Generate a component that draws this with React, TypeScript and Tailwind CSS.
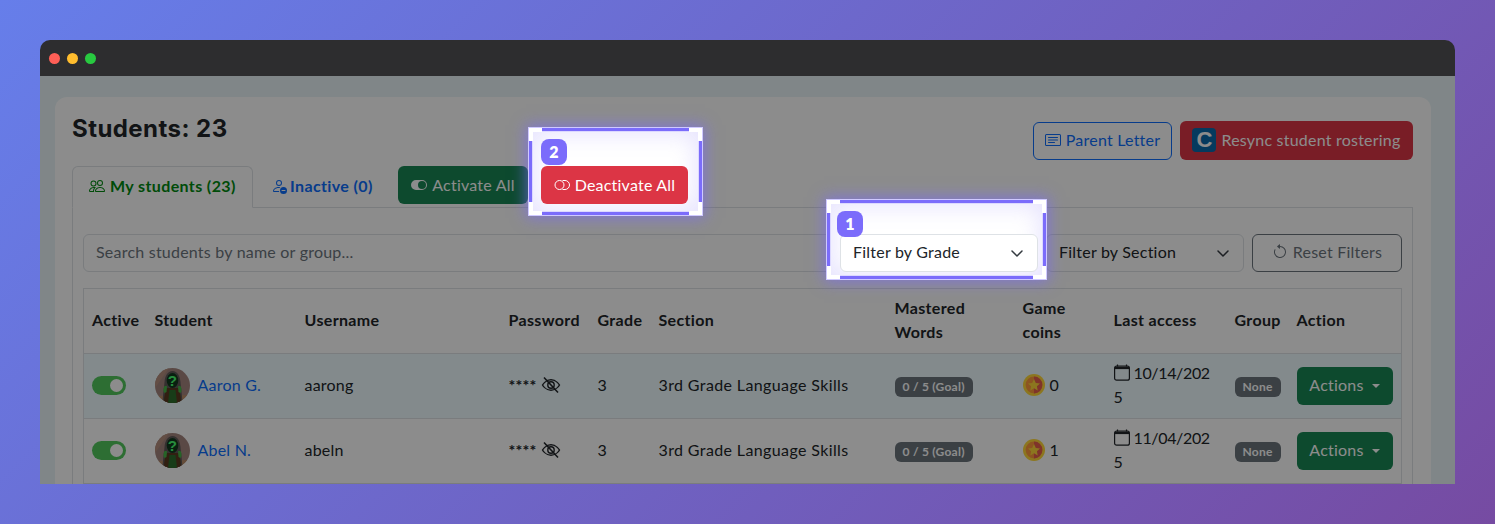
import React from "react";

const Corner = ({ pos }: { pos: string }) => <span className={`absolute w-[13px] h-[13px] border-white ${pos}`} />;

function Spot({ cls, badge, badgeCls, children }: { cls: string; badge: string; badgeCls: string; children: React.ReactNode }) {
  return (
    <div className="relative z-20 shrink-0">
      <div className={`absolute bg-white border-[3px] border-[#7b6cfb] outline outline-1 outline-[#cfc9ff] shadow-[0_0_14px_3px_rgba(123,108,251,0.65),inset_0_0_0_1px_#dcd8ff,inset_0_0_22px_4px_rgba(123,108,251,0.18)] ${cls}`}>
        <Corner pos="-top-[3px] -left-[3px] border-t-[4px] border-l-[4px]" />
        <Corner pos="-top-[3px] -right-[3px] border-t-[4px] border-r-[4px]" />
        <Corner pos="-bottom-[3px] -left-[3px] border-b-[4px] border-l-[4px]" />
        <Corner pos="-bottom-[3px] -right-[3px] border-b-[4px] border-r-[4px]" />
      </div>
      <div className="relative">{children}</div>
      <span className={`absolute w-[26px] h-[26px] rounded-lg bg-[#7b6cfb] text-white text-[16px] font-extrabold flex items-center justify-center ${badgeCls}`}>{badge}</span>
    </div>
  );
}

const Chevron = () => (
  <svg width="16" height="16" viewBox="0 0 16 16" fill="none" stroke="#343a40" strokeWidth="1.5" strokeLinecap="round" strokeLinejoin="round" className="mt-[2px]"><path d="m3 6 5 5 5-5" /></svg>
);

const People = () => (
  <svg width="16" height="16" viewBox="0 0 16 16" fill="currentColor"><path d="M15 14s1 0 1-1-1-4-5-4-5 3-5 4 1 1 1 1zm-7.978-1L7 12.996c.001-.264.167-1.03.76-1.72C8.312 10.629 9.282 10 11 10c1.717 0 2.687.63 3.24 1.276.593.69.758 1.457.76 1.72l-.008.002-.014.002zM11 7a2 2 0 1 0 0-4 2 2 0 0 0 0 4m3-2a3 3 0 1 1-6 0 3 3 0 0 1 6 0M6.936 9.28a6 6 0 0 0-1.23-.247A7 7 0 0 0 5 9c-4 0-5 3-5 4q0 1 1 1h4.216A2.24 2.24 0 0 1 5 13c0-1.01.377-2.042 1.09-2.904.243-.294.526-.569.846-.816M4.92 10A5.5 5.5 0 0 0 4 13H1c0-.26.164-1.03.76-1.724.545-.636 1.492-1.256 3.16-1.275ZM1.5 5.5a3 3 0 1 1 6 0 3 3 0 0 1-6 0m3-2a2 2 0 1 0 0 4 2 2 0 0 0 0-4" /></svg>
);
const PersonDash = () => (
  <svg width="16" height="16" viewBox="0 0 16 16" fill="currentColor"><path d="M12.5 16a3.5 3.5 0 1 0 0-7 3.5 3.5 0 0 0 0 7M11 12h3a.5.5 0 0 1 0 1h-3a.5.5 0 0 1 0-1" fillRule="evenodd" /><path d="M8 8a3 3 0 1 0 0-6 3 3 0 0 0 0 6m2-3a2 2 0 1 1-4 0 2 2 0 0 1 4 0M8 9c-4 0-6 2.500-6 4 0 1 1 1 1 1h5.256A4.500 4.500 0 0 1 8 13H3c.01-.24.16-.97.84-1.650C4.500 10.690 5.740 10 8 10c.2 0 .4.01.58.02.23-.33.51-.63.82-.88A9 9 0 0 0 8 9" /></svg>
);
const ToggleOn = () => (
  <svg width="16" height="16" viewBox="0 0 16 16" fill="currentColor"><path d="M5 3a5 5 0 0 0 0 10h6a5 5 0 0 0 0-10zm6 9a4 4 0 1 1 0-8 4 4 0 0 1 0 8" /></svg>
);
const ToggleOff = () => (
  <svg width="16" height="16" viewBox="0 0 16 16" fill="none" stroke="currentColor"><circle cx="5.500" cy="8" r="4.500" /><path d="M8.500 3.500H11a4.500 4.500 0 0 1 0 9H8.500" /></svg>
);
const Letter = () => (
  <svg width="16" height="16" viewBox="0 0 16 16" fill="currentColor"><path d="M14.500 3a.5.5 0 0 1 .5.5v9a.5.5 0 0 1-.5.5h-13a.5.5 0 0 1-.5-.5v-9a.5.5 0 0 1 .5-.5zm-13-1A1.500 1.500 0 0 0 0 3.500v9A1.500 1.500 0 0 0 1.500 14h13a1.500 1.500 0 0 0 1.500-1.500v-9A1.500 1.500 0 0 0 14.500 2z" /><path d="M3 5.500a.5.5 0 0 1 .5-.5h9a.5.5 0 0 1 0 1h-9a.5.5 0 0 1-.5-.5M3 8a.5.5 0 0 1 .5-.5h9a.5.5 0 0 1 0 1h-9A.5.5 0 0 1 3 8m0 2.500a.5.5 0 0 1 .5-.5h6a.5.5 0 0 1 0 1h-6a.5.5 0 0 1-.5-.5" /></svg>
);
const Reset = () => (
  <svg width="16" height="16" viewBox="0 0 16 16" fill="currentColor"><path fillRule="evenodd" d="M8 3a5 5 0 1 1-4.546 2.914.5.5 0 0 0-.908-.417A6 6 0 1 0 8 2z" /><path d="M8 4.466V.534a.25.25 0 0 0-.41-.192L5.230 2.308a.25.25 0 0 0 0 .384l2.360 1.966A.25.25 0 0 0 8 4.466" /></svg>
);
const EyeSlash = () => (
  <svg width="20" height="20" viewBox="0 0 20 20" fill="none" stroke="#212529" strokeWidth="1.4" className="shrink-0"><path d="M1.500 10S4.500 4.800 10 4.800 18.500 10 18.500 10 15.500 15.200 10 15.200 1.500 10 1.500 10Z" /><circle cx="10" cy="10" r="3.200" /><path d="M3 2.500 17 17.500" strokeWidth="1.600" /></svg>
);
const Calendar = () => (
  <svg width="16" height="17" viewBox="0 0 16 17" fill="none" className="shrink-0"><rect x="0.600" y="2" width="14.800" height="14.200" rx="2" stroke="#212529" strokeWidth="1.200" /><path d="M1 2.500h14v2.600H1z" fill="#212529" /><path d="M3.500 0.600v2M12.500 0.600v2" stroke="#212529" strokeWidth="1.200" /></svg>
);
const Coin = () => (
  <svg width="22" height="22" viewBox="0 0 22 22" className="shrink-0"><circle cx="11" cy="11" r="11" fill="#ffd83a" /><circle cx="11" cy="11" r="8.400" fill="#ff9a3c" /><path d="M11 2.600a8.400 8.400 0 0 1 0 16.800z" fill="#e8604e" /><path d="m11 5 1.800 3.900 4.200.5-3.100 2.800.8 4.200L11 14.300l-3.700 2.100.8-4.200L5 9.400l4.200-.5z" fill="#ffd83a" /></svg>
);
const Avatar = () => (
  <svg width="35" height="35" viewBox="0 0 35 35" className="shrink-0 rounded-full">
    <rect width="35" height="35" fill="#a5867f" />
    <path d="M0 0h14L0 20z" fill="#b58f7e" />
    <path d="M0 28 35 27v8H0z" fill="#b98c68" />
    <path d="M17.500 3c5 0 7.500 5 8 11 .5 7 1.500 11 2 21H7.500c.5-10 1.500-14 2-21 .5-6 3-11 8-11Z" fill="#5f5a58" />
    <path d="M9 35c0-7 1-11 3-15h11c2 4 3 8 3 15z" fill="#5a3a20" />
    <path d="M14.500 22h6l1.500 13H13z" fill="#2c6e2c" />
    <path d="M9.500 18c-1.500 3-1.500 5 0 7l2-1 .5-6zM25.500 18c1.500 3 1.500 5 0 7l-2-1-.5-6z" fill="#46b548" />
    <ellipse cx="17.500" cy="12.500" rx="5.800" ry="7.500" fill="#123a1e" />
    <text x="17.500" y="18" textAnchor="middle" fontSize="15" fontWeight="800" fill="#48ff72" fontFamily="'Liberation Sans',sans-serif">?</text>
  </svg>
);

const Th = ({ children }: { children: React.ReactNode }) => (
  <th className="px-2 pt-[7px] pb-[9px] text-left font-bold tracking-[0.35px] align-middle border-b border-[#dee2e6] leading-6">{children}</th>
);

const Pill = ({ children }: { children: React.ReactNode }) => (
  <span className="inline-block px-[8px] py-[4px] rounded-md bg-[#6c757d] text-white text-[12px] font-bold tracking-[0.25px] leading-3">{children}</span>
);

function Row({ name, user, coins, date, tint }: { name: string; user: string; coins: string; date: string; tint?: boolean }) {
  const td = "px-2 pt-[7px] pb-[9px] align-middle";
  return (
    <tr className={`border-b border-[#dee2e6] h-[65px] ${tint ? "bg-[#eefbff]" : ""}`}>
      <td className={td}><span className="flex items-center justify-end w-[34px] h-[19px] rounded-full bg-[#52c85e] pr-[3px]"><span className="w-[13px] h-[13px] rounded-full bg-white" /></span></td>
      <td className={td}><span className="flex items-center gap-2"><Avatar /><span className="text-[#0d6efd]">{name}</span></span></td>
      <td className={td}>{user}</td>
      <td className={td}><span className="flex items-center gap-[4px]"><span className="font-bold tracking-[0.2px]">****</span><EyeSlash /></span></td>
      <td className={td}>3</td>
      <td className={`${td} tracking-[0.38px]`}>3rd Grade Language Skills</td>
      <td className={td}><Pill>0 / 5 (Goal)</Pill></td>
      <td className={td}><span className="flex items-center gap-[5px]"><Coin />{coins}</span></td>
      <td className="pl-2 pr-[14px] pt-[7px] pb-[9px] align-middle leading-6 tracking-[-0.35px]"><span className="[word-break:break-all]"><span className="inline-block align-[-2px] mr-[4px]"><Calendar /></span>{date}</span></td>
      <td className={td}><Pill>None</Pill></td>
      <td className="p-2 align-middle"><button className="w-[96px] h-[38px] rounded-md bg-[#198754] text-white flex items-center justify-center gap-2 pb-[2px]">Actions<span className="w-0 h-0 mt-[1px] border-x-[4.500px] border-x-transparent border-t-[4.500px] border-t-white" /></button></td>
    </tr>
  );
}

export default function App() {
  return (
    <div className="w-[1495px] h-[524px] p-10 overflow-hidden bg-[linear-gradient(135deg,#667eea_0%,#764ba2_100%)] text-[16px] tracking-[0.22px] text-[#212529] font-['Lato','Noto_Sans',sans-serif]">
      <div className="h-[444px] rounded-t-[10px] overflow-hidden flex flex-col">
        <div className="h-9 shrink-0 bg-[#2d2d2f] flex items-center gap-[7px] pl-[9px]">
          <span className="w-[11px] h-[11px] rounded-full bg-[#ff5f57]" />
          <span className="w-[11px] h-[11px] rounded-full bg-[#ffbd2e]" />
          <span className="w-[11px] h-[11px] rounded-full bg-[#28c940]" />
        </div>
        <div className="relative flex-1 bg-[#e9f5f7] pt-[21px] px-[15px] pr-6 overflow-hidden">
          <div className="rounded-t-xl bg-white px-[17px] pr-[18px] pt-[23px] h-[500px]">
            <div className="flex items-start justify-between h-[46px]">
              <h1 className="text-[24px] leading-[18px] font-bold tracking-[0.45px] font-['Inter',sans-serif] text-[#212529]">Students: 23</h1>
              <div className="flex gap-2 items-center pt-px">
                <button className="h-[38px] w-[139px] rounded-md border border-[#0d6efd] text-[#0d6efd] pb-[2px] flex items-center justify-center gap-[5px]"><Letter />Parent Letter</button>
                <button className="h-[39px] w-[233px] rounded-md bg-[#dc3545] text-white pb-[2px] flex items-center justify-center gap-[5px]">
                  <span className="w-6 h-6 rounded-[4px] bg-[#0a6aab] font-['Liberation_Sans',sans-serif] font-bold text-[22px] flex items-center justify-center">C</span>
                  Resync student rostering
                </button>
              </div>
            </div>
            <div className="flex items-start h-[42px] relative">
              <div className="h-[42px] w-[181px] rounded-t-md border border-[#dee2e6] border-b-white bg-white relative z-[1] flex items-center pl-[16px] pb-[2px] gap-[5px] font-bold tracking-[0.38px] text-[#008a10]"><People />My students (23)</div>
              <div className="h-[42px] w-[120px] flex items-center pl-[18px] pb-[2px] gap-[3px] font-bold tracking-[0.38px] text-[#0d6efd]"><PersonDash />Inactive (0)</div>
              <button className="ml-[25px] h-[38px] w-[130px] rounded-md bg-[#198754] text-white flex items-center justify-center gap-[5px]"><ToggleOn />Activate All</button>
              <div className="ml-[13px]">
                <Spot cls="-left-[12px] -right-[14px] -top-[38px] -bottom-[11px]" badge="2" badgeCls="left-0 -top-[27px]">
                  <button className="h-[38px] w-[147px] rounded-md bg-[#dc3545] text-white flex items-center justify-center gap-[5px]"><ToggleOff />Deactivate All</button>
                </Spot>
              </div>
            </div>
            <div className="border border-[#dee2e6] p-[10px] pt-[26px] -mt-px h-[400px]">
              <div className="flex gap-2 h-[38px]">
                <div className="flex-1 rounded-md border border-[#dee2e6] bg-white px-3 pb-[2px] flex items-center text-[#6c757d]">Search students by name or group...</div>
                <Spot cls="-left-[13px] -right-[8px] -top-[34px] -bottom-[7px]" badge="1" badgeCls="-left-[3px] -top-[23px]">
                  <div className="w-[198px] h-[38px] rounded-md border border-[#dee2e6] bg-white pl-3 pr-[12px] pb-[2px] flex items-center justify-between">Filter by Grade<Chevron /></div>
                </Spot>
                <div className="w-[198px] h-[38px] rounded-md border border-[#dee2e6] bg-white pl-3 pr-[12px] pb-[2px] flex items-center justify-between">Filter by Section<Chevron /></div>
                <button className="w-[150px] h-[38px] rounded-md border border-[#6c757d] text-[#6c757d] pb-[2px] flex items-center justify-center gap-[5px]"><Reset />Reset Filters</button>
              </div>
              <table className="mt-[16px] w-[1318px] table-fixed border-collapse border border-[#dee2e6]">
                <colgroup>
                  {[63, 150, 204, 89, 61, 236, 128, 91, 121, 62, 113].map((w, i) => <col key={i} style={{ width: w }} />)}
                </colgroup>
                <thead>
                  <tr className="h-[64px]">
                    <Th>Active</Th><Th>Student</Th><Th>Username</Th><Th>Password</Th><Th>Grade</Th><Th>Section</Th>
                    <Th>Mastered Words</Th><Th>Game coins</Th><Th>Last access</Th><Th>Group</Th><Th>Action</Th>
                  </tr>
                </thead>
                <tbody>
                  <Row name="Aaron G." user="aarong" coins="0" date="10/14/2025" tint />
                  <Row name="Abel N." user="abeln" coins="1" date="11/04/2025" />
                </tbody>
              </table>
            </div>
          </div>
          <div className="absolute inset-0 z-10 bg-black/45" />
        </div>
      </div>
    </div>
  );
}
